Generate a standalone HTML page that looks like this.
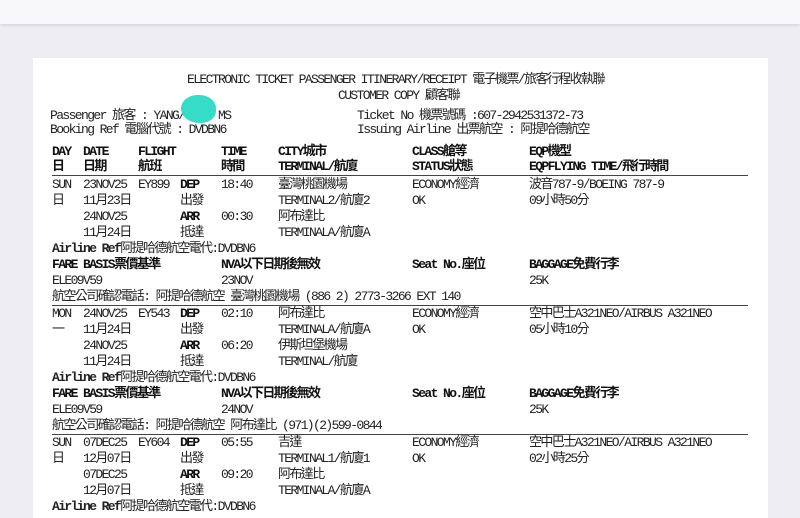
<!DOCTYPE html>
<html><head><meta charset="utf-8"><style>
body{margin:0;width:800px;height:505px;overflow:hidden;background:#eeedf2;position:relative;font-family:"Liberation Mono","Noto Sans CJK TC",monospace;color:#222}
.top{position:absolute;left:0;top:0;width:800px;height:24px;background:#f8f7fa;box-shadow:0 1px 3px rgba(0,0,0,.12)}
.paper{position:absolute;left:33px;top:58px;width:735px;height:460px;background:#fff}
.t{position:absolute;font-size:13px;line-height:16px;letter-spacing:-1.6px;white-space:nowrap}
.b{font-weight:bold;color:#111}
.hr{position:absolute;left:52px;width:696px;height:1px;background:#444}
.blob{position:absolute;left:181px;top:95px;width:35px;height:28px;background:#35dcc7;border-radius:50% 50% 45% 55%}
</style></head><body>
<div class="top"></div>
<div class="paper"></div>
<div class="t" style="left:187px;top:72px">ELECTRONIC TICKET PASSENGER ITINERARY/RECEIPT 電子機票/旅客行程收執聯</div>
<div class="t" style="left:338px;top:88px">CUSTOMER COPY 顧客聯</div>
<div class="t" style="left:50px;top:108px">Passenger 旅客 : YANG/</div>
<div class="t" style="left:218px;top:108px">MS</div>
<div class="blob"></div>
<div class="t" style="left:50px;top:122px">Booking Ref 電腦代號 : DVDBN6</div>
<div class="t" style="left:357px;top:108px">Ticket No 機票號碼 :607-2942531372-73</div>
<div class="t" style="left:357px;top:122px">Issuing Airline 出票航空 : 阿提哈德航空</div>

<div class="t b" style="left:52px;top:144px">DAY</div><div class="t b" style="left:83px;top:144px">DATE</div><div class="t b" style="left:138px;top:144px">FLIGHT</div><div class="t b" style="left:221px;top:144px">TIME</div><div class="t b" style="left:278px;top:144px">CITY城市</div><div class="t b" style="left:412px;top:144px">CLASS艙等</div><div class="t b" style="left:529px;top:144px">EQP機型</div>
<div class="t b" style="left:52px;top:159px">日</div><div class="t b" style="left:83px;top:159px">日期</div><div class="t b" style="left:138px;top:159px">航班</div><div class="t b" style="left:221px;top:159px">時間</div><div class="t b" style="left:278px;top:159px">TERMINAL/航廈</div><div class="t b" style="left:412px;top:159px">STATUS狀態</div><div class="t b" style="left:529px;top:159px">EQPFLYING TIME/飛行時間</div>
<div class="hr" style="top:175px"></div>

<div class="t" style="left:52px;top:177px">SUN</div><div class="t" style="left:83px;top:177px">23NOV25</div><div class="t" style="left:138px;top:177px">EY899</div><div class="t b" style="left:180px;top:177px">DEP</div><div class="t" style="left:221px;top:177px">18:40</div><div class="t" style="left:278px;top:177px">臺灣桃園機場</div><div class="t" style="left:412px;top:177px">ECONOMY經濟</div><div class="t" style="left:529px;top:177px">波音787-9/BOEING 787-9</div>
<div class="t" style="left:52px;top:193px">日</div><div class="t" style="left:83px;top:193px">11月23日</div><div class="t" style="left:180px;top:193px">出發</div><div class="t" style="left:278px;top:193px">TERMINAL2/航廈2</div><div class="t" style="left:412px;top:193px">OK</div><div class="t" style="left:529px;top:193px">09小時50分</div>
<div class="t" style="left:83px;top:209px">24NOV25</div><div class="t b" style="left:180px;top:209px">ARR</div><div class="t" style="left:221px;top:209px">00:30</div><div class="t" style="left:278px;top:209px">阿布達比</div>
<div class="t" style="left:83px;top:225px">11月24日</div><div class="t" style="left:180px;top:225px">抵達</div><div class="t" style="left:278px;top:225px">TERMINALA/航廈A</div>
<div class="t" style="left:52px;top:241px"><b>Airline Ref</b>阿提哈德航空電代:DVDBN6</div>
<div class="t b" style="left:52px;top:257px">FARE BASIS票價基準</div><div class="t b" style="left:221px;top:257px">NVA以下日期後無效</div><div class="t b" style="left:412px;top:257px">Seat No.座位</div><div class="t b" style="left:529px;top:257px">BAGGAGE免費行李</div>
<div class="t" style="left:52px;top:273px">ELE09V59</div><div class="t" style="left:221px;top:273px">23NOV</div><div class="t" style="left:529px;top:273px">25K</div>
<div class="t" style="left:52px;top:289px">航空公司確認電話: 阿提哈德航空 臺灣桃園機場 (886 2) 2773-3266 EXT 140</div>
<div class="hr" style="top:305px"></div>

<div class="t" style="left:52px;top:306px">MON</div><div class="t" style="left:83px;top:306px">24NOV25</div><div class="t" style="left:138px;top:306px">EY543</div><div class="t b" style="left:180px;top:306px">DEP</div><div class="t" style="left:221px;top:306px">02:10</div><div class="t" style="left:278px;top:306px">阿布達比</div><div class="t" style="left:412px;top:306px">ECONOMY經濟</div><div class="t" style="left:529px;top:306px">空中巴士A321NEO/AIRBUS A321NEO</div>
<div class="t" style="left:52px;top:322px">一</div><div class="t" style="left:83px;top:322px">11月24日</div><div class="t" style="left:180px;top:322px">出發</div><div class="t" style="left:278px;top:322px">TERMINALA/航廈A</div><div class="t" style="left:412px;top:322px">OK</div><div class="t" style="left:529px;top:322px">05小時10分</div>
<div class="t" style="left:83px;top:338px">24NOV25</div><div class="t b" style="left:180px;top:338px">ARR</div><div class="t" style="left:221px;top:338px">06:20</div><div class="t" style="left:278px;top:338px">伊斯坦堡機場</div>
<div class="t" style="left:83px;top:354px">11月24日</div><div class="t" style="left:180px;top:354px">抵達</div><div class="t" style="left:278px;top:354px">TERMINAL/航廈</div>
<div class="t" style="left:52px;top:370px"><b>Airline Ref</b>阿提哈德航空電代:DVDBN6</div>
<div class="t b" style="left:52px;top:386px">FARE BASIS票價基準</div><div class="t b" style="left:221px;top:386px">NVA以下日期後無效</div><div class="t b" style="left:412px;top:386px">Seat No.座位</div><div class="t b" style="left:529px;top:386px">BAGGAGE免費行李</div>
<div class="t" style="left:52px;top:402px">ELE09V59</div><div class="t" style="left:221px;top:402px">24NOV</div><div class="t" style="left:529px;top:402px">25K</div>
<div class="t" style="left:52px;top:418px">航空公司確認電話: 阿提哈德航空 阿布達比 (971)(2)599-0844</div>
<div class="hr" style="top:434px"></div>

<div class="t" style="left:52px;top:435px">SUN</div><div class="t" style="left:83px;top:435px">07DEC25</div><div class="t" style="left:138px;top:435px">EY604</div><div class="t b" style="left:180px;top:435px">DEP</div><div class="t" style="left:221px;top:435px">05:55</div><div class="t" style="left:278px;top:435px">吉達</div><div class="t" style="left:412px;top:435px">ECONOMY經濟</div><div class="t" style="left:529px;top:435px">空中巴士A321NEO/AIRBUS A321NEO</div>
<div class="t" style="left:52px;top:451px">日</div><div class="t" style="left:83px;top:451px">12月07日</div><div class="t" style="left:180px;top:451px">出發</div><div class="t" style="left:278px;top:451px">TERMINAL1/航廈1</div><div class="t" style="left:412px;top:451px">OK</div><div class="t" style="left:529px;top:451px">02小時25分</div>
<div class="t" style="left:83px;top:467px">07DEC25</div><div class="t b" style="left:180px;top:467px">ARR</div><div class="t" style="left:221px;top:467px">09:20</div><div class="t" style="left:278px;top:467px">阿布達比</div>
<div class="t" style="left:83px;top:483px">12月07日</div><div class="t" style="left:180px;top:483px">抵達</div><div class="t" style="left:278px;top:483px">TERMINALA/航廈A</div>
<div class="t" style="left:52px;top:499px"><b>Airline Ref</b>阿提哈德航空電代:DVDBN6</div>
</body></html>
